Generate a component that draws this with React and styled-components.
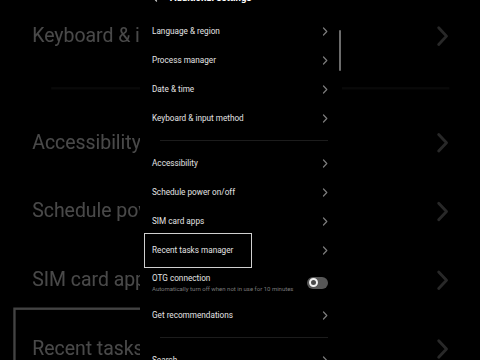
import styled, { createGlobalStyle } from 'styled-components';

const GlobalStyle = createGlobalStyle`
  html, body {
    margin: 0;
    padding: 0;
    background: #000;
  }
  body {
    font-family: Roboto, "Noto Sans", "Liberation Sans", sans-serif;
    -webkit-font-smoothing: antialiased;
  }
`

const groups = [
  [
    { label: 'Language & region' },
    { label: 'Process manager' },
    { label: 'Date & time' },
    { label: 'Keyboard & input method' },
  ],
  [
    { label: 'Accessibility' },
    { label: 'Schedule power on/off' },
    { label: 'SIM card apps' },
    { label: 'Recent tasks manager', marked: true },
    { label: 'OTG connection', note: 'Automatically turn off when not in use for 10 minutes', toggle: true },
    { label: 'Get recommendations' },
  ],
  [
    { label: 'Search' },
  ],
]

function Chevron({ left }) {
  return (
    <svg width="6" height="9" viewBox="0 0 6 9" fill="none">
      <path
        d={left ? 'M4.5 1L1.2 4.5L4.5 8' : 'M1.5 1L4.8 4.5L1.5 8'}
        stroke="currentColor"
        strokeWidth="1.2"
        strokeLinecap="round"
        strokeLinejoin="round"
      />
    </svg>
  )
}

function Screen({ zoomed }) {
  return (
    <Panel>
      <Header>
        <Back><Chevron left /></Back>
        <HeaderTitle>Additional settings</HeaderTitle>
      </Header>
      <List>
        {groups.map((items, g) => (
          <Group key={g}>
            {g > 0 && <Divider />}
            {items.map((item) => (
              <Row key={item.label} $tall={!!item.note}>
                <Texts>
                  <Label>{item.label}</Label>
                  {item.note && <Note>{item.note}</Note>}
                </Texts>
                {item.toggle ? (
                  <Toggle><Knob /></Toggle>
                ) : (
                  <Arrow><Chevron /></Arrow>
                )}
                {item.marked && <Marker />}
              </Row>
            ))}
          </Group>
        ))}
      </List>
      {!zoomed && <Scrollbar />}
    </Panel>
  )
}

export default function App() {
  return (
    <Page>
      <GlobalStyle />
      <Backdrop aria-hidden="true">
        <Zoom>
          <Stage>
            <Screen zoomed />
          </Stage>
        </Zoom>
      </Backdrop>
      <Stage>
        <Screen />
      </Stage>
    </Page>
  )
}

const Page = styled.div`
  position: relative;
  width: 480px;
  height: 360px;
  overflow: hidden;
  background: #000;
`

const Backdrop = styled.div`
  position: absolute;
  inset: 0;
  opacity: 0.32;
  filter: blur(0.7px);
  pointer-events: none;
`

const Zoom = styled.div`
  width: 480px;
  height: 360px;
  transform-origin: 0 0;
  transform: translate(-328px, -244.7px) scale(2.37);
`

const Stage = styled.div`
  position: relative;
  display: flex;
  align-items: flex-start;
  padding-left: 140px;
  height: 360px;
`

const Panel = styled.div`
  position: relative;
  width: 202px;
  min-height: 400px;
  background: #000;
  color: #e4e4e4;
  display: flex;
  flex-direction: column;
  flex-shrink: 0;
`

const Header = styled.div`
  flex-shrink: 0;
  height: 22px;
  margin-top: -14px;
  display: flex;
  align-items: center;
  padding-left: 12px;
  gap: 12px;
`

const Back = styled.span`
  display: flex;
  color: #cfcfcf;
`

const HeaderTitle = styled.span`
  font-size: 9.6px;
  font-weight: 700;
  color: #fff;
  white-space: nowrap;
`

const List = styled.div`
  flex-shrink: 0;
  margin-top: 8.5px;
  display: flex;
  flex-direction: column;
`

const Group = styled.div`
  display: flex;
  flex-direction: column;
`

const Divider = styled.div`
  height: 1px;
  margin: 7.5px 14px 7.5px 20px;
  background: #1c1c1c;
`

const Row = styled.div`
  position: relative;
  flex-shrink: 0;
  height: ${props => props.$tall ? '36px' : '29px'};
  display: flex;
  align-items: center;
  justify-content: space-between;
  padding: 0 14px 0 12px;
`

const Texts = styled.div`
  display: flex;
  flex-direction: column;
`

const Label = styled.span`
  font-size: 8.2px;
  line-height: 12px;
  color: #e4e4e4;
  white-space: nowrap;
`

const Note = styled.span`
  font-size: 6px;
  line-height: 8px;
  margin-top: 1px;
  color: #7a7a7a;
  white-space: nowrap;
`

const Arrow = styled.span`
  display: flex;
  color: #7c7c7c;
`

const Toggle = styled.span`
  width: 21px;
  height: 12px;
  border-radius: 6px;
  background: #575757;
  display: flex;
  align-items: center;
  padding-left: 1.5px;
  box-sizing: border-box;
`

const Knob = styled.span`
  width: 9px;
  height: 9px;
  border-radius: 50%;
  box-sizing: border-box;
  border: 2px solid #f2f2f2;
  background: #4a4a4a;
`

const Marker = styled.span`
  position: absolute;
  top: -2.5px;
  bottom: -3.5px;
  left: 4px;
  width: 108px;
  box-sizing: border-box;
  border: 1.5px solid #d0d0d0;
`

const Scrollbar = styled.span`
  position: absolute;
  right: 1px;
  top: 30px;
  width: 2px;
  height: 41px;
  border-radius: 1px;
  background: #6c6c6c;
`
